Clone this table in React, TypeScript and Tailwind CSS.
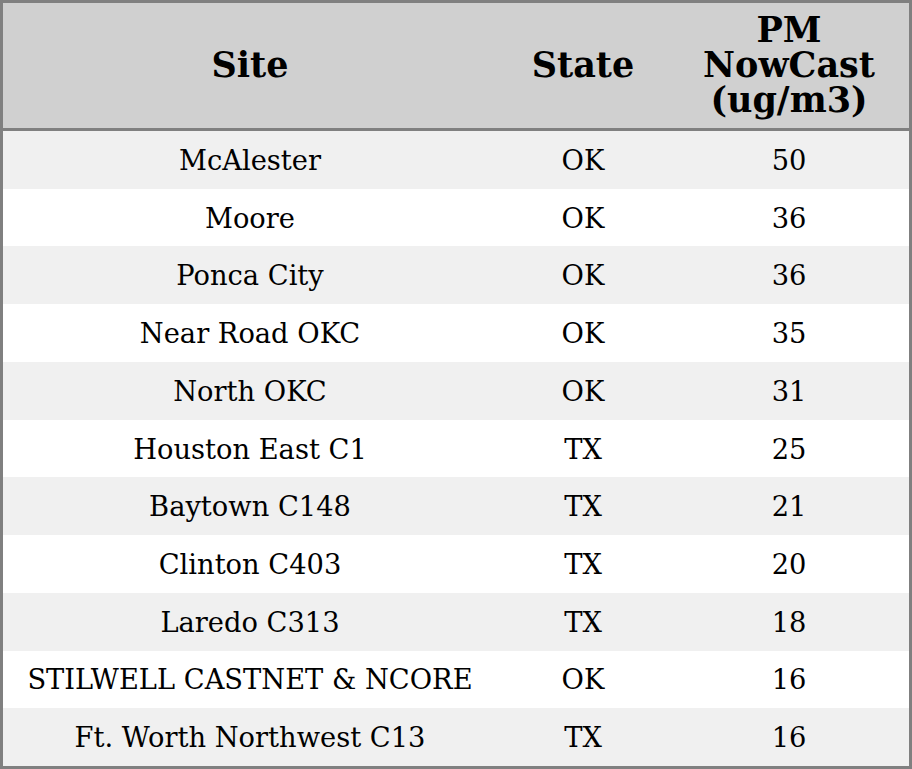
import React from "react";

const rows: [string, string, string][] = [
  ["McAlester", "OK", "50"],
  ["Moore", "OK", "36"],
  ["Ponca City", "OK", "36"],
  ["Near Road OKC", "OK", "35"],
  ["North OKC", "OK", "31"],
  ["Houston East C1", "TX", "25"],
  ["Baytown C148", "TX", "21"],
  ["Clinton C403", "TX", "20"],
  ["Laredo C313", "TX", "18"],
  ["STILWELL CASTNET & NCORE", "OK", "16"],
  ["Ft. Worth Northwest C13", "TX", "16"],
];

export default function App() {
  return (
    <div
      className="w-[912px] h-[769px] bg-white text-black"
      style={{ fontFamily: '"DejaVu Serif", serif' }}
    >
      <div className="w-full h-full border-[3px] border-[#808080] flex flex-col">
        <div className="h-[125px] pb-[3px] bg-[#d0d0d0] grid grid-cols-[494px_172px_1fr] items-center font-bold text-[35px] leading-[35px] text-center">
          <div>Site</div>
          <div>State</div>
          <div>
            PM
            <br />
            NowCast
            <br />
            (ug/m3)
          </div>
        </div>
        <div className="h-[3px] bg-[#808080]" />
        <div className="flex-1 grid grid-rows-[repeat(11,1fr)]">
          {rows.map((r, i) => (
            <div
              key={i}
              className={`grid grid-cols-[494px_172px_1fr] items-center text-center text-[27.3px] pt-[3px] ${
                i % 2 === 0 ? "bg-[#f0f0f0]" : "bg-white"
              }`}
            >
              <div>{r[0]}</div>
              <div>{r[1]}</div>
              <div>{r[2]}</div>
            </div>
          ))}
        </div>
      </div>
    </div>
  );
}
